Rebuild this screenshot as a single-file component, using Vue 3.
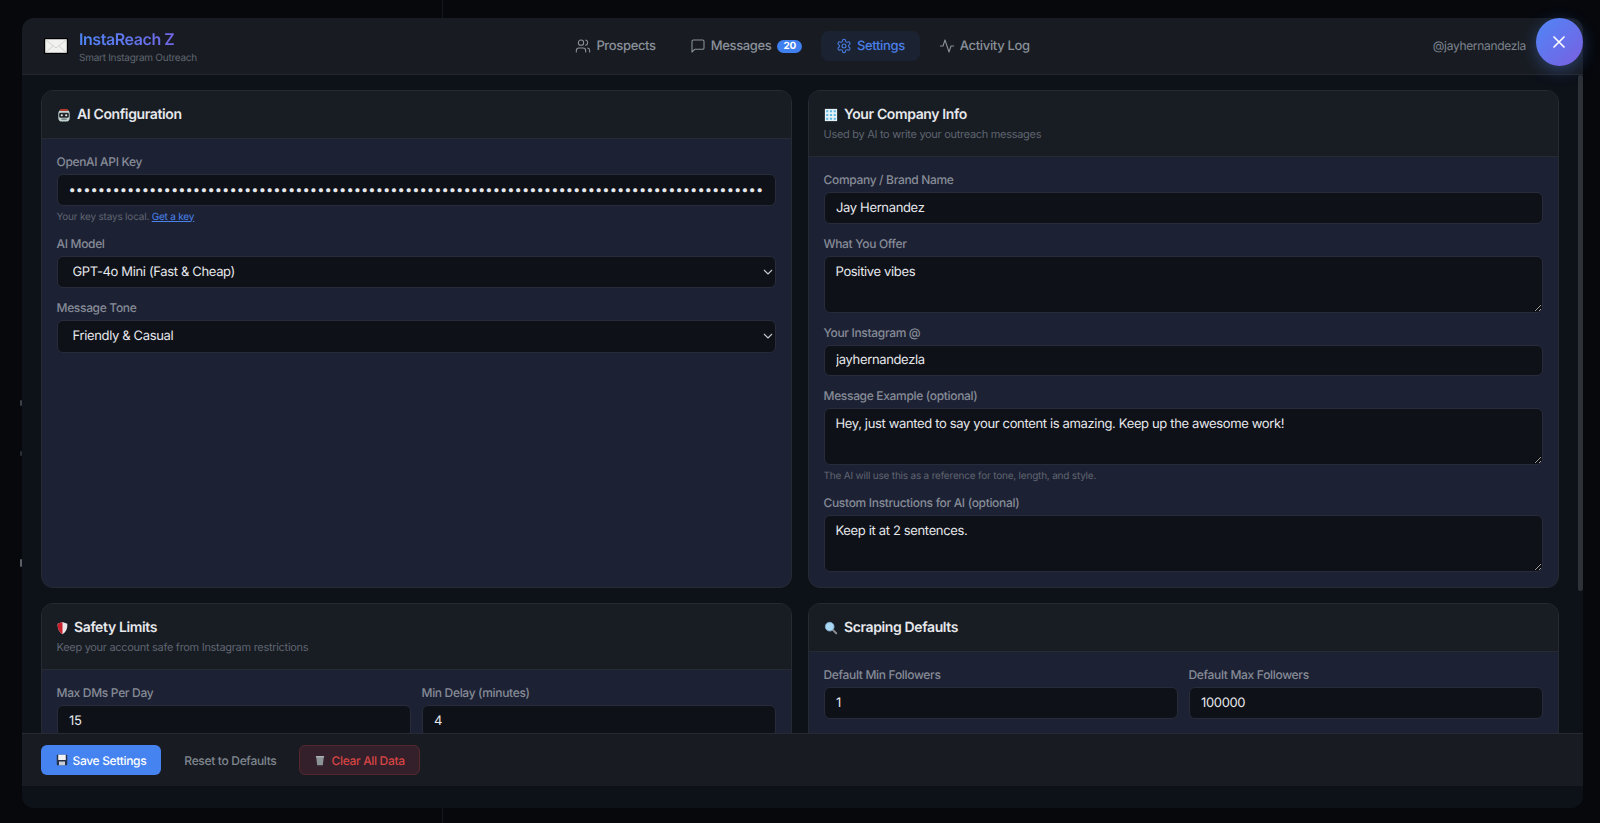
<script setup>
const key = 'x'.repeat(164)
</script>

<template>
  <div class="page">
    <span class="bgline"></span>
    <span class="speck s1"></span><span class="speck s2"></span><span class="speck s3"></span>
    <div class="modal">
      <header class="top">
        <div class="brand">
          <svg class="envelope" width="24" height="16" viewBox="0 0 24 16">
            <rect x="0.5" y="0.5" width="23" height="15" fill="#f1f1ef" stroke="#000" stroke-width="1.4"/>
            <path d="M2 2l10 8 10-8M2 14l7-6M22 14l-7-6" fill="none" stroke="#c9c9c6" stroke-width="0.8"/>
          </svg>
          <div>
            <div class="name">InstaReach Z</div>
            <div class="tag">Smart Instagram Outreach</div>
          </div>
        </div>
        <nav class="nav">
          <a class="tab">
            <svg viewBox="0 0 24 24"><path d="M16 21v-2a4 4 0 0 0-4-4H6a4 4 0 0 0-4 4v2"/><circle cx="9" cy="7" r="4"/><path d="M22 21v-2a4 4 0 0 0-3-3.87"/><path d="M16 3.13a4 4 0 0 1 0 7.75"/></svg>
            Prospects
          </a>
          <a class="tab">
            <svg viewBox="0 0 24 24"><path d="M21 15a2 2 0 0 1-2 2H7l-4 4V5a2 2 0 0 1 2-2h14a2 2 0 0 1 2 2z"/></svg>
            Messages <span class="badge">20</span>
          </a>
          <a class="tab active">
            <svg viewBox="0 0 24 24"><path d="M12.22 2h-.44a2 2 0 0 0-2 2v.18a2 2 0 0 1-1 1.73l-.43.25a2 2 0 0 1-2 0l-.15-.08a2 2 0 0 0-2.73.73l-.22.38a2 2 0 0 0 .73 2.73l.15.1a2 2 0 0 1 1 1.72v.51a2 2 0 0 1-1 1.74l-.15.09a2 2 0 0 0-.73 2.73l.22.38a2 2 0 0 0 2.73.73l.15-.08a2 2 0 0 1 2 0l.43.25a2 2 0 0 1 1 1.73V20a2 2 0 0 0 2 2h.44a2 2 0 0 0 2-2v-.18a2 2 0 0 1 1-1.73l.43-.25a2 2 0 0 1 2 0l.15.08a2 2 0 0 0 2.73-.73l.22-.39a2 2 0 0 0-.73-2.73l-.15-.08a2 2 0 0 1-1-1.74v-.5a2 2 0 0 1 1-1.74l.15-.09a2 2 0 0 0 .73-2.73l-.22-.38a2 2 0 0 0-2.73-.73l-.15.08a2 2 0 0 1-2 0l-.43-.25a2 2 0 0 1-1-1.73V4a2 2 0 0 0-2-2z"/><circle cx="12" cy="12" r="3"/></svg>
            Settings
          </a>
          <a class="tab">
            <svg viewBox="0 0 24 24"><path d="M22 12h-4l-3 9L9 3l-3 9H2"/></svg>
            Activity Log
          </a>
        </nav>
        <div class="handle">@jayhernandezla</div>
      </header>

      <main class="main">
        <div class="grid">
          <section class="card">
            <div class="card-head solo">
              <h3>
                <svg class="emoji" viewBox="0 0 16 16">
                  <rect x="1.500" y="2" width="13" height="13.500" rx="4.500" fill="#c3d4d0"/>
                  <rect x="3.500" y="1" width="9" height="2.500" rx="1" fill="#b5382c"/>
                  <rect x="2.500" y="5.500" width="11" height="5.500" rx="1.500" fill="#23262b"/>
                  <circle cx="5.500" cy="8.200" r="1.200" fill="#eee"/><circle cx="10.500" cy="8.200" r="1.200" fill="#eee"/>
                  <rect x="5" y="12" width="6" height="1.500" fill="#6d7a78"/>
                </svg>
                AI Configuration
              </h3>
            </div>
            <div class="card-body">
              <label class="field">
                <span class="lab">OpenAI API Key</span>
                <input type="password" :value="key" />
                <span class="hint">Your key stays local. <a class="link">Get a key</a></span>
              </label>
              <label class="field">
                <span class="lab">AI Model</span>
                <select class="sel"><option>GPT-4o Mini (Fast &amp; Cheap)</option></select>
              </label>
              <label class="field">
                <span class="lab">Message Tone</span>
                <select class="sel"><option>Friendly &amp; Casual</option></select>
              </label>
            </div>
          </section>

          <section class="card">
            <div class="card-head">
              <h3>
                <svg class="emoji" viewBox="0 0 16 16">
                  <rect x="1" y="1" width="14" height="14" fill="#e3f2f8"/>
                  <path d="M2.500 2.500h2.400v2.400H2.500zM6.800 2.500h2.400v2.400H6.800zM11.100 2.500h2.400v2.400h-2.400zM2.500 6.800h2.400v2.400H2.500zM6.800 6.800h2.400v2.400H6.800zM11.100 6.800h2.400v2.400h-2.400zM2.500 11.100h2.400v2.400H2.500zM6.800 11.100h2.400v2.400H6.800zM11.100 11.100h2.400v2.400h-2.400z" fill="#62b6e3"/>
                </svg>
                Your Company Info
              </h3>
              <p class="sub">Used by AI to write your outreach messages</p>
            </div>
            <div class="card-body">
              <label class="field">
                <span class="lab">Company / Brand Name</span>
                <input type="text" value="Jay Hernandez" />
              </label>
              <label class="field">
                <span class="lab">What You Offer</span>
                <textarea>Positive vibes</textarea>
              </label>
              <label class="field">
                <span class="lab">Your Instagram @</span>
                <input type="text" value="jayhernandezla" />
              </label>
              <label class="field">
                <span class="lab">Message Example (optional)</span>
                <textarea>Hey, just wanted to say your content is amazing. Keep up the awesome work!</textarea>
                <span class="hint">The AI will use this as a reference for tone, length, and style.</span>
              </label>
              <label class="field">
                <span class="lab">Custom Instructions for AI (optional)</span>
                <textarea>Keep it at 2 sentences.</textarea>
              </label>
            </div>
          </section>

          <section class="card">
            <div class="card-head">
              <h3>
                <svg class="emoji shield" viewBox="2 0 12 16">
                  <path d="M8 1l5.500 2c.3 5-1.200 9.500-5.500 12C3.700 12.500 2.200 8 2.500 3z" fill="#e9e9e9"/>
                  <path d="M8 1L2.500 3C2.200 8 3.700 12.500 8 15z" fill="#c8202c"/>
                </svg>
                Safety Limits
              </h3>
              <p class="sub">Keep your account safe from Instagram restrictions</p>
            </div>
            <div class="card-body">
              <div class="two">
                <label class="field">
                  <span class="lab">Max DMs Per Day</span>
                  <input type="text" value="15" />
                </label>
                <label class="field">
                  <span class="lab">Min Delay (minutes)</span>
                  <input type="text" value="4" />
                </label>
              </div>
            </div>
          </section>

          <section class="card">
            <div class="card-head solo">
              <h3>
                <svg class="emoji" viewBox="0 0 16 16">
                  <path d="M9.500 9.500l4.500 4.500" stroke="#8b8f94" stroke-width="2.200" stroke-linecap="round"/>
                  <circle cx="6.500" cy="6.500" r="5" fill="#a9d8f5" stroke="#7fa8c4"/>
                </svg>
                Scraping Defaults
              </h3>
            </div>
            <div class="card-body">
              <div class="two">
                <label class="field">
                  <span class="lab">Default Min Followers</span>
                  <input type="text" value="1" />
                </label>
                <label class="field">
                  <span class="lab">Default Max Followers</span>
                  <input type="text" value="100000" />
                </label>
              </div>
            </div>
          </section>
        </div>
        <div class="thumb"></div>
      </main>

      <footer class="foot">
        <button class="btn primary">
          <svg class="emoji small" viewBox="0 0 16 16">
            <rect x="1" y="1" width="14" height="14" rx="1" fill="#27324a"/>
            <rect x="3" y="1" width="10" height="7" fill="#f2f2f2"/>
            <rect x="4" y="10" width="8" height="5" fill="#c9ced6"/>
          </svg>
          Save Settings
        </button>
        <button class="btn ghost">Reset to Defaults</button>
        <button class="btn danger">
          <svg class="emoji small" viewBox="0 0 16 16">
            <path d="M3 4h10l-1.200 11H4.200z" fill="#8b9296"/>
            <rect x="2.500" y="2.500" width="11" height="2" rx=".5" fill="#aab0b3"/>
          </svg>
          Clear All Data
        </button>
      </footer>
      <div class="foot-gap"></div>
    </div>
    <button class="close" aria-label="Close">
      <svg viewBox="0 0 24 24"><path d="M18 6 6 18M6 6l12 12"/></svg>
    </button>
  </div>
</template>

<style>
html, body { margin: 0; background: #06080c; }
</style>

<style scoped>
.page {
  position: relative;
  box-sizing: border-box;
  height: 823px;
  overflow: hidden;
  padding: 18px 17px 16px 22px;
  background: #06080c;
  font-family: Inter, "Liberation Sans", sans-serif;
  text-rendering: geometricPrecision;
  color: #e6e8ec;
}
.page * { letter-spacing: -.027em; }
.bgline { position: absolute; left: 442px; top: 0; bottom: 0; width: 1px; background: #14171e; }
.speck { position: absolute; left: 20px; width: 2px; border-radius: 1px; background: #3a3f48; }
.s1 { top: 400px; height: 6px; }
.s2 { top: 451px; height: 5px; background: #2a2e36; }
.s3 { top: 559px; height: 8px; background: #5a5f68; }

.modal {
  position: relative;
  display: flex;
  flex-direction: column;
  height: 790px;
  border-radius: 12px;
  overflow: hidden;
  background: #0d1118;
}
.top {
  flex: none;
  height: 56px;
  display: grid;
  grid-template-columns: 1fr auto 1fr;
  align-items: center;
  padding: 0 22px;
  background: #181c22;
  border-bottom: 1px solid #23272e;
}
.brand { display: flex; align-items: center; gap: 11px; }
.envelope { flex: none; }
.name {
  font-size: 16px;
  font-weight: 600;
  line-height: 20px;
  background: linear-gradient(90deg, #4f86f7, #7a5fe0);
  -webkit-background-clip: text;
  background-clip: text;
  color: transparent;
}
.tag { margin-top: 3px; font-size: 10px; line-height: 12px; color: #5f6570; }
.nav { display: flex; align-items: center; gap: 4px; }
.tab {
  display: flex;
  align-items: center;
  gap: 5px;
  height: 30px;
  padding: 0 15px;
  border-radius: 8px;
  font-size: 13px;
  font-weight: 500;
  color: #8a909a;
}
.tab svg, .close svg {
  width: 16px; height: 16px; fill: none; stroke: currentColor; stroke-width: 1.6;
  stroke-linecap: round; stroke-linejoin: round;
}
.tab.active { background: #1b2332; color: #4a7fe8; }
.badge {
  margin-left: 1px;
  padding: 1px 6px;
  border-radius: 7px;
  background: #3f7ff0;
  color: #fff;
  font-size: 10px;
  font-weight: 700;
  line-height: 11px;
}
.handle { justify-self: end; margin: 0 35px 1px 0; font-size: 12px; color: #7d838d; }

.main { position: relative; flex: 1; min-height: 0; overflow: hidden; padding: 15px 24.500px 0 18.500px; }
.grid { display: grid; grid-template-columns: 1fr 1fr; grid-template-rows: 498px auto; gap: 15px 16px; }
.thumb {
  position: absolute; right: 0; top: 0; width: 5px; height: 516px;
  background: #2d3138; border-radius: 3px;
}
.card {
  border: 1px solid #262a32;
  border-radius: 12px;
  overflow: hidden;
  background: #1d2134;
}
.card-head { padding: 15px 15px 14px; background: #181c23; border-bottom: 1px solid #262a32; }
h3 {
  display: flex;
  align-items: center;
  gap: 6.500px;
  margin: 0;
  font-size: 14px;
  font-weight: 600;
  line-height: 18px;
  color: #e6e8ec;
}
.emoji { width: 14px; height: 14px; flex: none; }
.emoji.shield { width: 11px; }
.emoji.small { width: 12px; height: 12px; }
.sub { margin: 2px 0 0; font-size: 11px; line-height: 16px; color: #5f6570; }
.card-body { padding: 15px; display: flex; flex-direction: column; gap: 12px; }
.field { display: flex; flex-direction: column; }
.lab { font-size: 12px; font-weight: 500; line-height: 16px; color: #868c97; margin-bottom: 4px; }
input, select, textarea {
  box-sizing: border-box;
  width: 100%;
  border: 1px solid #282c3a;
  border-radius: 6px;
  background: #0f1118;
  color: #e6e8ec;
  font-family: inherit;
  font-size: 13px;
  text-rendering: geometricPrecision;
  outline: none;
  color-scheme: dark;
}
input { height: 31.500px; padding: 0 11.500px; }
input[type="password"] { letter-spacing: 0; padding: 0 11px; }
.sel {
  height: 32.500px;
  padding: 0 15px;
  appearance: none;
  background-image: url("data:image/svg+xml,%3Csvg xmlns='http://www.w3.org/2000/svg' width='10' height='6' viewBox='0 0 10 6'%3E%3Cpath d='M1 1l4 4 4-4' fill='none' stroke='%23c8cace' stroke-width='1.100'/%3E%3C/svg%3E");
  background-repeat: no-repeat;
  background-position: right 2px center;
}
textarea { display: block; height: 57px; padding: 7px 11px; line-height: 16px; resize: vertical; }
.hint { margin-top: 4px; font-size: 10px; line-height: 14px; letter-spacing: -.02em; color: #5f6570; }
.link { color: #4a82ea; text-decoration: underline; letter-spacing: -.02em; }
.two { display: grid; grid-template-columns: 1fr 1fr; gap: 11px; }

.foot {
  flex: none;
  height: 53px;
  box-sizing: border-box;
  display: flex;
  align-items: center;
  gap: 8px;
  padding: 0 18.500px;
  background: #181c22;
  border-top: 1px solid #262a32;
}
.foot-gap { flex: none; height: 22px; background: #0d1118; }
.btn {
  display: flex;
  align-items: center;
  gap: 5px;
  height: 30px;
  padding: 0 14px;
  border: 1px solid transparent;
  border-radius: 6px;
  font-family: inherit;
  font-size: 12px;
  font-weight: 500;
  text-rendering: geometricPrecision;
}
.primary { background: #4483f0; color: #fff; }
.ghost { background: transparent; color: #80868f; }
.danger { background: #33202a; border-color: #56282e; color: #d84545; }
.close {
  position: absolute;
  left: 1535.500px;
  top: 18px;
  width: 47px;
  height: 48px;
  display: flex;
  align-items: center;
  justify-content: center;
  padding: 0;
  border: 0;
  border-radius: 50%;
  background: linear-gradient(135deg, #4f86f7, #7a5fe0);
  box-shadow: 0 4px 16px rgba(79, 134, 247, .35);
  color: #fff;
}
.close svg { width: 20px; height: 20px; stroke-width: 2; }
</style>
